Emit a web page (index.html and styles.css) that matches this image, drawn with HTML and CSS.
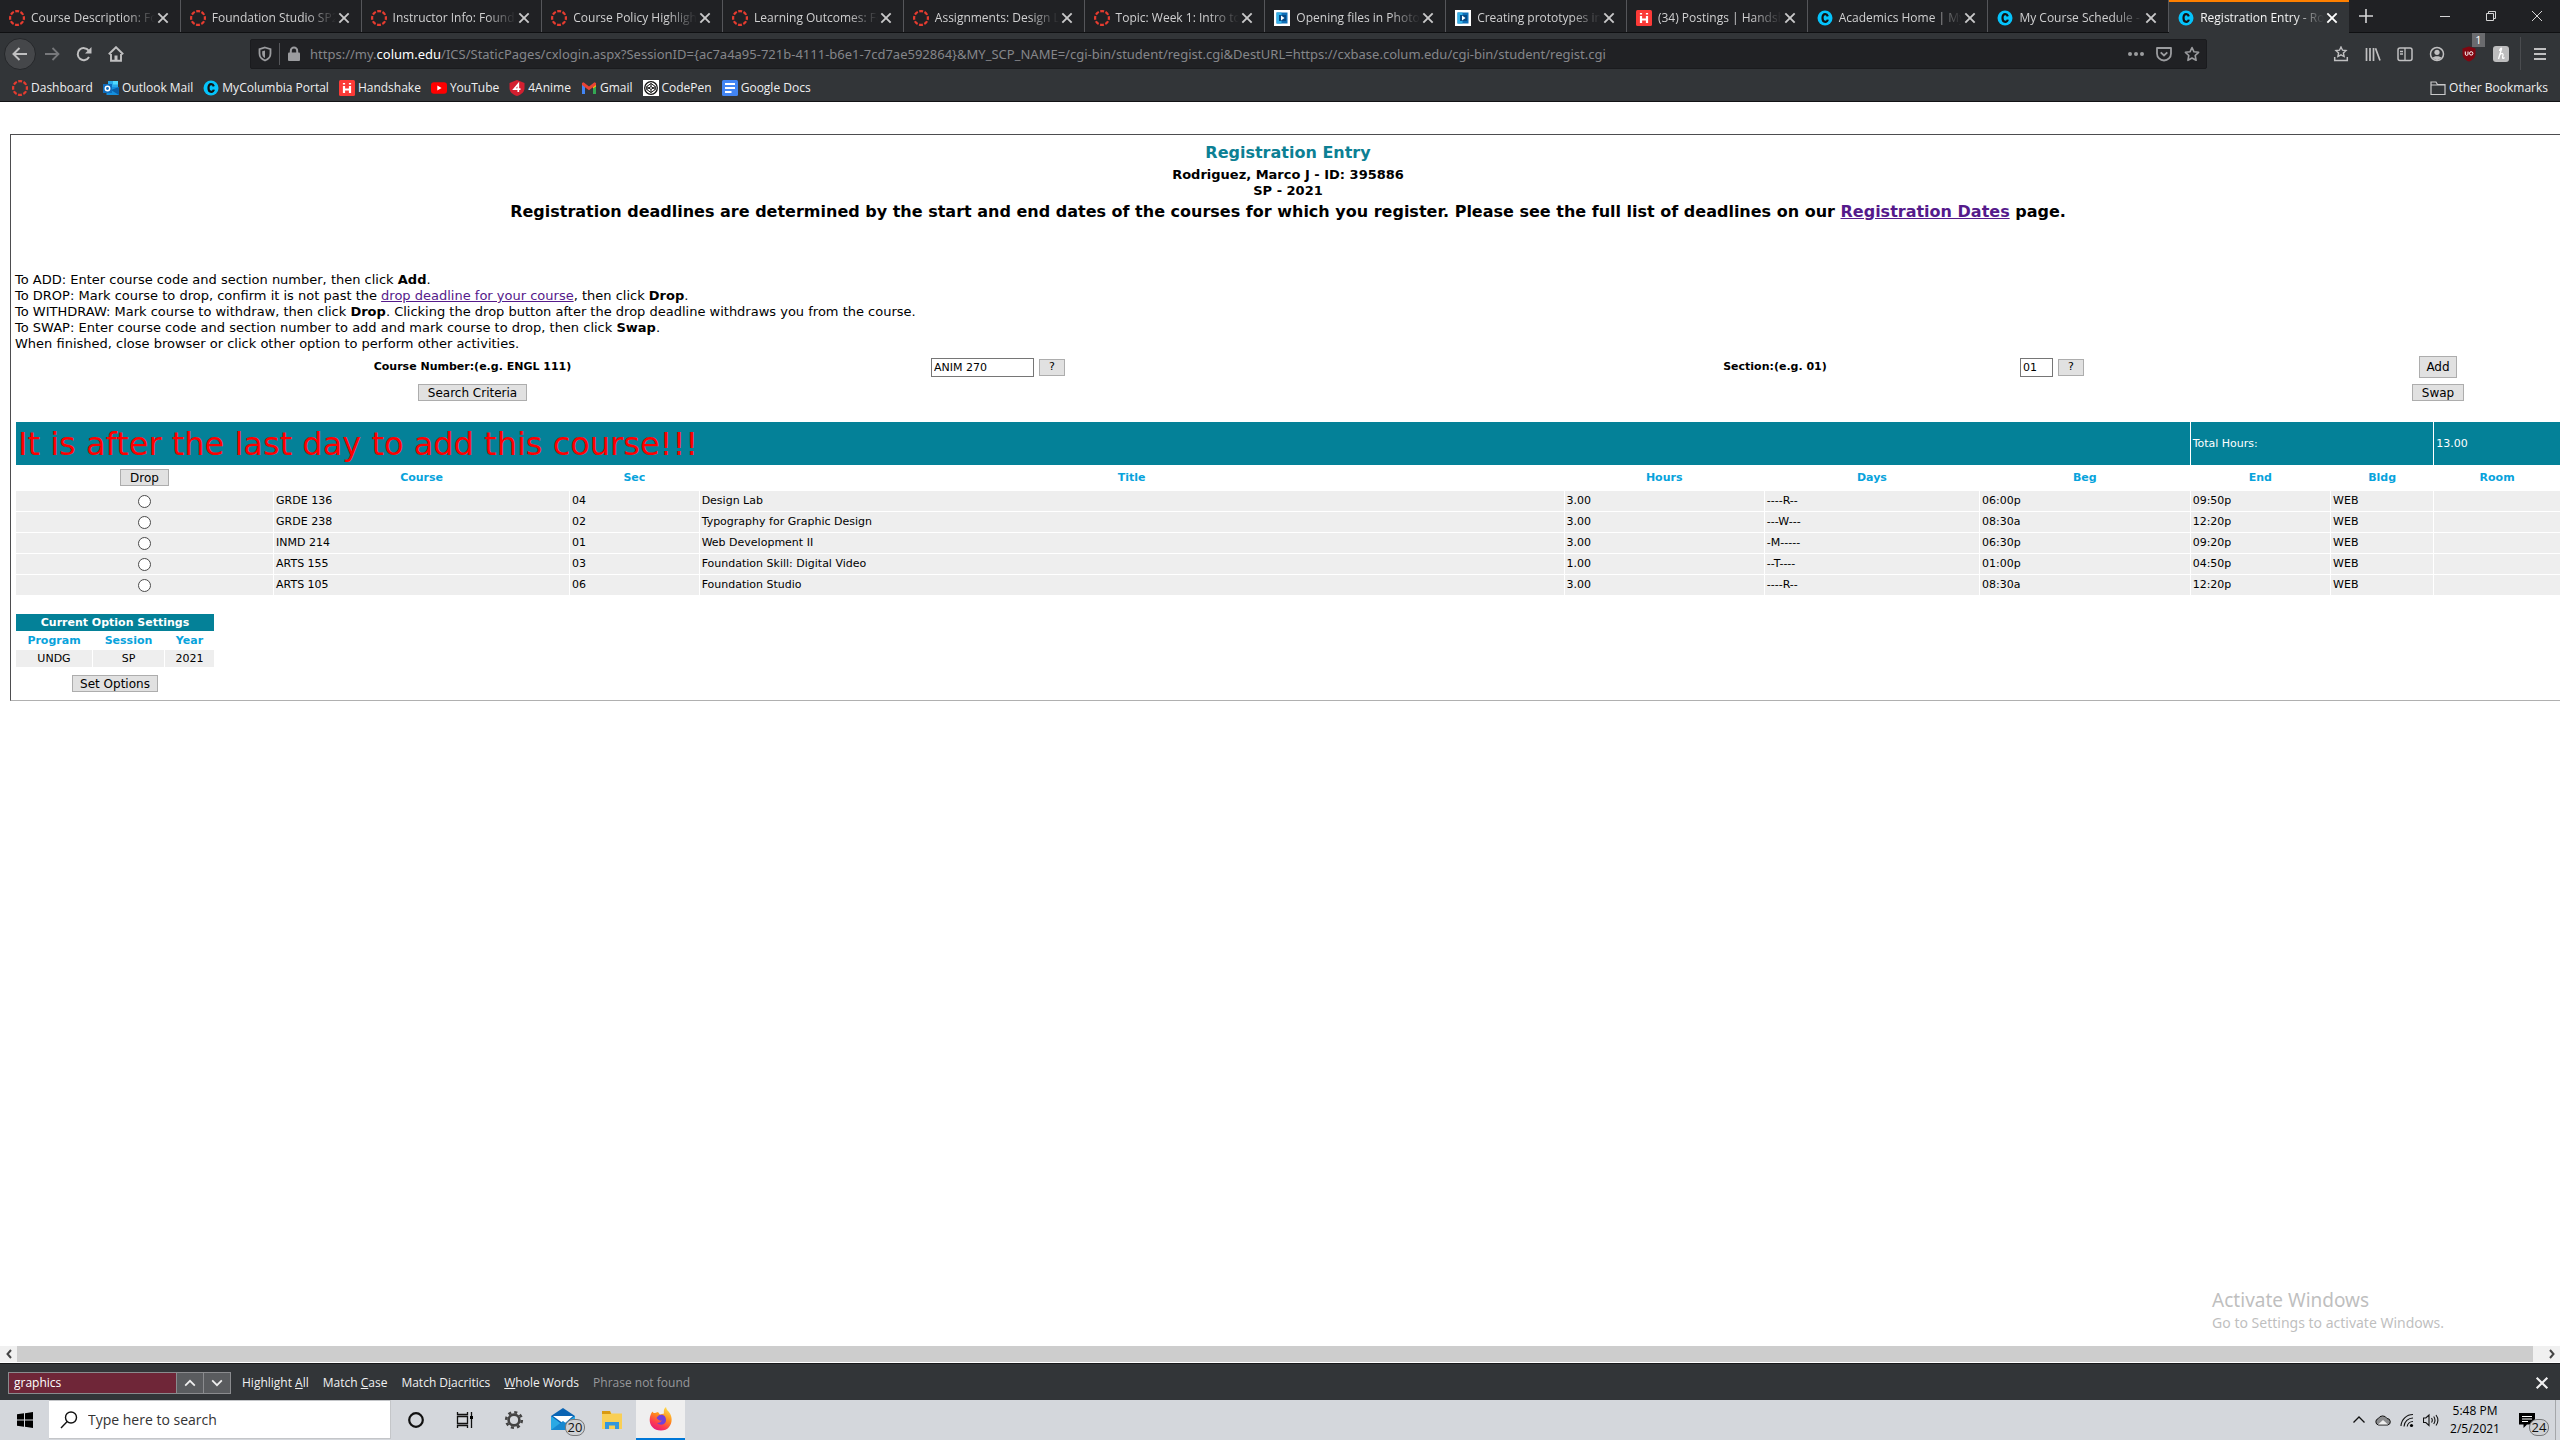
FILE: index.html
```
<!DOCTYPE html>
<html lang="en">
<head>
<meta charset="utf-8">
<title>Registration Entry</title>
<link rel="stylesheet" href="styles.css">
</head>
<body>
<svg class="defs" aria-hidden="true">
  <symbol id="canvas" viewBox="0 0 16 16"><circle cx="8" cy="8" r="6.900" fill="none" stroke="#e63c30" stroke-width="2.200" stroke-dasharray="3.900 1.520" stroke-dashoffset="2"/></symbol>
  <symbol id="lesson" viewBox="0 0 16 16"><path fill="#fff" d="M0 0h16v16H0z"/><path fill="#0f6fb8" d="M2.500 2.500h11v11h-11z"/><path fill="#33b1e8" d="M2.500 2.500h5v11h-5z"/><path fill="#064a86" d="M5 5h7v6H5z"/><path fill="#fff" d="M7 5.500v5L10.500 8z"/></symbol>
  <symbol id="handshake" viewBox="0 0 16 16"><rect width="16" height="16" rx="1.500" fill="#fb3a37"/><path d="M5 6v7M11 6v7M5 9.500h6M5 3v1.600M11 3v1.600" stroke="#fff" stroke-width="2.200"/></symbol>
  <symbol id="columbia" viewBox="0 0 16 16"><circle cx="8" cy="8" r="7.500" fill="#05c3fb"/><path d="M10.800 6.300C10.300 4.800 9.400 4.200 8.200 4.200 6.400 4.200 5.500 5.500 5.500 8s.9 3.800 2.700 3.800c1.300 0 2.300-.7 2.600-2.200" fill="none" stroke="#111" stroke-width="2.200"/></symbol>
  <symbol id="x" viewBox="0 0 12 12"><path d="M2 2l8 8M10 2l-8 8" fill="none" stroke="currentColor" stroke-width="1.600"/></symbol>
  <symbol id="star" viewBox="0 0 16 16"><path d="M8 1.500l2 4.300 4.600.5-3.400 3.200.9 4.800L8 12l-4.100 2.300.9-4.800L1.400 6.300 6 5.800z" fill="none" stroke="currentColor" stroke-width="1.600" stroke-linejoin="round"/></symbol>
</svg>

<nav class="tabs" aria-label="Tabs">
  <div class="tab"><svg class="ico"><use href="#canvas"/></svg><span class="tab-title">Course Description: Fo</span><button class="close" aria-label="Close tab"><svg><use href="#x"/></svg></button></div>
  <div class="tab"><svg class="ico"><use href="#canvas"/></svg><span class="tab-title">Foundation Studio SP2</span><button class="close" aria-label="Close tab"><svg><use href="#x"/></svg></button></div>
  <div class="tab"><svg class="ico"><use href="#canvas"/></svg><span class="tab-title">Instructor Info: Founda</span><button class="close" aria-label="Close tab"><svg><use href="#x"/></svg></button></div>
  <div class="tab"><svg class="ico"><use href="#canvas"/></svg><span class="tab-title">Course Policy Highligh</span><button class="close" aria-label="Close tab"><svg><use href="#x"/></svg></button></div>
  <div class="tab"><svg class="ico"><use href="#canvas"/></svg><span class="tab-title">Learning Outcomes: Fo</span><button class="close" aria-label="Close tab"><svg><use href="#x"/></svg></button></div>
  <div class="tab"><svg class="ico"><use href="#canvas"/></svg><span class="tab-title">Assignments: Design L</span><button class="close" aria-label="Close tab"><svg><use href="#x"/></svg></button></div>
  <div class="tab"><svg class="ico"><use href="#canvas"/></svg><span class="tab-title">Topic: Week 1: Intro to</span><button class="close" aria-label="Close tab"><svg><use href="#x"/></svg></button></div>
  <div class="tab"><svg class="ico"><use href="#lesson"/></svg><span class="tab-title">Opening files in Photos</span><button class="close" aria-label="Close tab"><svg><use href="#x"/></svg></button></div>
  <div class="tab"><svg class="ico"><use href="#lesson"/></svg><span class="tab-title">Creating prototypes in</span><button class="close" aria-label="Close tab"><svg><use href="#x"/></svg></button></div>
  <div class="tab"><svg class="ico"><use href="#handshake"/></svg><span class="tab-title">(34) Postings | Handsh</span><button class="close" aria-label="Close tab"><svg><use href="#x"/></svg></button></div>
  <div class="tab"><svg class="ico"><use href="#columbia"/></svg><span class="tab-title">Academics Home | My</span><button class="close" aria-label="Close tab"><svg><use href="#x"/></svg></button></div>
  <div class="tab"><svg class="ico"><use href="#columbia"/></svg><span class="tab-title">My Course Schedule - S</span><button class="close" aria-label="Close tab"><svg><use href="#x"/></svg></button></div>
  <div class="tab active"><svg class="ico"><use href="#columbia"/></svg><span class="tab-title">Registration Entry - Ro</span><button class="close" aria-label="Close tab"><svg><use href="#x"/></svg></button></div>
  <div class="window-controls">
    <button aria-label="New tab"><svg viewBox="0 0 16 16"><path d="M8 1v14M1 8h14" stroke="#d5d5d6" stroke-width="1.600"/></svg></button>
    <span class="drag"></span>
    <button aria-label="Minimize"><svg viewBox="0 0 16 16"><path d="M3 8.500h10" stroke="#d5d5d6"/></svg></button>
    <button aria-label="Restore"><svg viewBox="0 0 16 16"><path d="M3.500 5.500h7v7h-7zM5.500 5V3.500h7v7H11" fill="none" stroke="#d5d5d6"/></svg></button>
    <button aria-label="Close window"><svg viewBox="0 0 16 16"><path d="M3 3l10 10M13 3L3 13" stroke="#d5d5d6"/></svg></button>
  </div>
</nav>

<div class="toolbar">
  <div class="nav-buttons">
    <button class="back" aria-label="Back"><svg viewBox="0 0 16 16"><path d="M15 8H2M7.500 2L1.500 8l6 6" fill="none" stroke="currentColor" stroke-width="2"/></svg></button>
    <button class="forward" aria-label="Forward"><svg viewBox="0 0 16 16"><path d="M1 8h13M8.500 2l6 6-6 6" fill="none" stroke="currentColor" stroke-width="1.800"/></svg></button>
    <button aria-label="Reload"><svg viewBox="0 0 16 16"><path d="M13 11a6 6 0 1 1-.4-6.400" fill="none" stroke="currentColor" stroke-width="2"/><path d="M15.500 1v6.500H9z" fill="currentColor"/></svg></button>
    <button aria-label="Home"><svg viewBox="0 0 16 16"><path d="M.8 8.300L8 1.200l7.200 7.100M3 8v6.800h10V8" fill="none" stroke="currentColor" stroke-width="1.900"/><path d="M6.500 15V9.500h3V15" fill="currentColor"/></svg></button>
  </div>
  <div class="url">
    <svg class="u16" viewBox="0 0 16 16"><path d="M8 1.500l5.500 1.600v4.400c0 3.500-2 5.700-5.500 7-3.500-1.300-5.500-3.500-5.500-7V3.100z" fill="none" stroke="currentColor" stroke-width="1.800"/><path d="M8 4.500v7.500C6 11 5.200 9.500 5.200 7.500V5.300z" fill="currentColor"/></svg>
    <i class="u-sep"></i>
    <svg class="u16" viewBox="0 0 16 16"><rect x="2" y="6.500" width="12" height="8.500" rx="1" fill="currentColor"/><path d="M4.800 7V4.800a3.200 3.200 0 0 1 6.400 0V7" fill="none" stroke="currentColor" stroke-width="2"/></svg>
    <span class="address">https://my.<b>colum.edu</b>/ICS/StaticPages/cxlogin.aspx?SessionID={ac7a4a95-721b-4111-b6e1-7cd7ae592864}&amp;MY_SCP_NAME=/cgi-bin/student/regist.cgi&amp;DestURL=https://cxbase.colum.edu/cgi-bin/student/regist.cgi</span>
    <div class="page-actions">
      <button aria-label="Page actions"><svg viewBox="0 0 16 16"><circle cx="2" cy="8" r="2" fill="currentColor"/><circle cx="8" cy="8" r="2" fill="currentColor"/><circle cx="14" cy="8" r="2" fill="currentColor"/></svg></button>
      <button aria-label="Save to Pocket"><svg viewBox="0 0 16 16"><path d="M1 2h14v5.500a7 7 0 0 1-14 0z" fill="none" stroke="currentColor" stroke-width="1.800" stroke-linejoin="round"/><path d="M4.700 6.300L8 9.500l3.300-3.200" fill="none" stroke="currentColor" stroke-width="1.800"/></svg></button>
      <button aria-label="Bookmark"><svg><use href="#star"/></svg></button>
    </div>
  </div>
  <div class="ext">
    <button aria-label="Bookmarks menu"><svg viewBox="0 0 16 16"><path d="M8 1l1.500 3.200 3.500.4-2.600 2.400.7 3.500L8 8.800l-3.100 1.700.7-3.500L3 4.600l3.500-.4z" fill="none" stroke="currentColor" stroke-width="1.400"/><path d="M1.700 11v3.500h12.600V11" fill="none" stroke="currentColor" stroke-width="1.500"/></svg></button>
    <button aria-label="Library"><svg viewBox="0 0 16 16"><path d="M1.500 2v13M5 2v13M8.500 2v13M10.500 2.300L15 14.500" fill="none" stroke="currentColor" stroke-width="1.700"/></svg></button>
    <button aria-label="Sidebars"><svg viewBox="0 0 16 16"><rect x="1" y="2" width="14" height="12.500" rx="2" fill="none" stroke="currentColor" stroke-width="1.500"/><path d="M8 2v12M3 5.500h3M3 8h3" stroke="currentColor" stroke-width="1.300"/></svg></button>
    <button aria-label="Account"><svg viewBox="0 0 16 16"><circle cx="8" cy="8" r="6.500" fill="none" stroke="currentColor" stroke-width="1.500"/><circle cx="8" cy="6.300" r="2.600" fill="currentColor"/><path d="M3.500 12c1-2.500 8-2.500 9 0L8 14.300z" fill="currentColor"/></svg></button>
    <button class="ublock" aria-label="uBlock Origin, 1 blocked"><svg viewBox="0 0 16 16"><path d="M8 .5l6.500 2v5c0 4-2.500 6.500-6.500 8-4-1.500-6.500-4-6.500-8v-5z" fill="#800610"/><path d="M4.300 5.500v2.700c0 1.600 2.700 1.600 2.700 0V5.500" fill="none" stroke="#fff"/><circle cx="10.200" cy="7.400" r="1.700" fill="none" stroke="#fff"/></svg><span class="count">1</span></button>
    <button aria-label="Honey"><svg viewBox="0 0 16 16"><rect width="16" height="16" rx="3" fill="#bdbdbe"/><path d="M5.500 13L8.500 3c.5-1.500-1.500-1-2 2M6.700 9c3-3 4-1 3 1.500-.6 2 .5 2.500 1.800 1" fill="none" stroke="#fff" stroke-width="1.300"/></svg></button>
    <i class="ext-sep"></i>
    <button aria-label="Menu"><svg viewBox="0 0 16 16"><path d="M2 3h12M2 8h12M2 13h12" stroke="currentColor" stroke-width="1.800"/></svg></button>
  </div>
</div>

<nav class="bookmarks" aria-label="Bookmarks">
  <a href="#"><svg class="ico"><use href="#canvas"/></svg>Dashboard</a>
  <a href="#"><svg class="ico" viewBox="0 0 16 16"><path fill="#28a8ea" d="M5 1h10v7H5z"/><path fill="#50d9ff" d="M10 1h5v3.500h-5z"/><path fill="#1490df" d="M3.500 7H16v8H3.500z"/><path fill="#0a5ea8" d="M16 7v8L8 10z"/><path fill="#0f6cbd" d="M0 4h9v9H0z"/><circle cx="4.500" cy="8.500" r="2.200" fill="none" stroke="#fff" stroke-width="1.500"/></svg>Outlook Mail</a>
  <a href="#"><svg class="ico"><use href="#columbia"/></svg>MyColumbia Portal</a>
  <a href="#"><svg class="ico"><use href="#handshake"/></svg>Handshake</a>
  <a href="#"><svg class="ico" viewBox="0 0 16 16"><rect y="2.300" width="16" height="11.400" rx="3" fill="#f00"/><path d="M6.300 5.500v5l4.300-2.500z" fill="#fff"/></svg>YouTube</a>
  <a href="#"><svg class="ico" viewBox="0 0 16 16"><path d="M8 0l7.500 3v5c0 4-3 6.500-7.500 8C3.500 14.500.5 12 .5 8V3z" fill="#d32030"/><path d="M9.300 12V4L5 9.200h6.500" fill="none" stroke="#fff" stroke-width="1.700"/></svg>4Anime</a>
  <a href="#"><svg class="ico" viewBox="0 0 16 16"><path d="M1 3.500h3V14H1z" fill="#4285f4"/><path d="M12 3.500h3V14h-3z" fill="#34a853"/><path d="M12 5l3-2v3.500l-3 2z" fill="#fbbc04"/><path d="M1 3l1.500-.8L8 6.500l5.500-4.300L15 3v2L8 10.300 1 5z" fill="#ea4335"/></svg>Gmail</a>
  <a href="#"><svg class="ico" viewBox="0 0 16 16"><path fill="#fff" d="M0 0h16v16H0z"/><circle cx="8" cy="8" r="6.300" fill="none" stroke="#111" stroke-width="1.300"/><path d="M8 3.500l4.300 3v3l-4.300 3-4.300-3v-3zM3.700 6.500L8 9.500l4.300-3M3.700 9.500L8 6.500l4.300 3M8 3.500v3M8 9.500v3" fill="none" stroke="#111"/></svg>CodePen</a>
  <a href="#"><svg class="ico" viewBox="0 0 16 16"><rect width="16" height="16" rx="1.500" fill="#4285f4"/><path d="M3 4h10M3 8h10M3 12h6.500" stroke="#fff" stroke-width="2"/></svg>Google Docs</a>
  <a class="other" href="#"><svg class="ico" viewBox="0 0 16 16"><path d="M1 14.500V2h5l1.500 2.500H15v10zM1 5h14" fill="none" stroke="#c9c9ca" stroke-width="1.200"/></svg>Other Bookmarks</a>
</nav>

<main class="page">
  <section class="frame">
    <header class="head">
      <h1>Registration Entry</h1>
      <p class="who">Rodriguez, Marco J - ID: 395886<br>SP - 2021</p>
      <p class="deadline">Registration deadlines are determined by the start and end dates of the courses for which you register. Please see the full list of deadlines on our <a href="#">Registration Dates</a> page.</p>
    </header>
    <p class="help">To ADD: Enter course code and section number, then click <b>Add</b>.<br>
      To DROP: Mark course to drop, confirm it is not past the <a href="#">drop deadline for your course</a>, then click <b>Drop</b>.<br>
      To WITHDRAW: Mark course to withdraw, then click <b>Drop</b>. Clicking the drop button after the drop deadline withdraws you from the course.<br>
      To SWAP: Enter course code and section number to add and mark course to drop, then click <b>Swap</b>.<br>
      When finished, close browser or click other option to perform other activities.</p>
    <form class="entry">
      <label for="course">Course Number:(e.g. ENGL 111)</label>
      <div class="field"><input class="course-input" id="course" value="ANIM 270"><button type="button" class="btn q">?</button></div>
      <label for="section">Section:(e.g. 01)</label>
      <div class="field"><input class="section-input" id="section" value="01"><button type="button" class="btn q">?</button></div>
      <button type="button" class="btn add">Add</button>
      <button type="button" class="btn">Search Criteria</button>
      <button type="button" class="btn swap">Swap</button>
    </form>
    <table class="courses">
      <colgroup><col class="c1"><col class="c2"><col class="c3"><col class="c4"><col class="c5"><col class="c6"><col class="c7"><col class="c8"><col class="c9"><col class="c10"></colgroup>
      <thead>
        <tr class="banner"><td class="alert" colspan="7">It is after the last day to add this course!!!</td><td colspan="2">Total Hours:</td><td>13.00</td></tr>
        <tr><th><button type="button" class="btn">Drop</button></th><th>Course</th><th>Sec</th><th>Title</th><th>Hours</th><th>Days</th><th>Beg</th><th>End</th><th>Bldg</th><th>Room</th></tr>
      </thead>
      <tbody>
        <tr><td><input type="radio" name="drop" aria-label="Drop GRDE 136"></td><td>GRDE 136</td><td>04</td><td>Design Lab</td><td>3.00</td><td>----R--</td><td>06:00p</td><td>09:50p</td><td>WEB</td><td></td></tr>
        <tr><td><input type="radio" name="drop" aria-label="Drop GRDE 238"></td><td>GRDE 238</td><td>02</td><td>Typography for Graphic Design</td><td>3.00</td><td>---W---</td><td>08:30a</td><td>12:20p</td><td>WEB</td><td></td></tr>
        <tr><td><input type="radio" name="drop" aria-label="Drop INMD 214"></td><td>INMD 214</td><td>01</td><td>Web Development II</td><td>3.00</td><td>-M-----</td><td>06:30p</td><td>09:20p</td><td>WEB</td><td></td></tr>
        <tr><td><input type="radio" name="drop" aria-label="Drop ARTS 155"></td><td>ARTS 155</td><td>03</td><td>Foundation Skill: Digital Video</td><td>1.00</td><td>--T----</td><td>01:00p</td><td>04:50p</td><td>WEB</td><td></td></tr>
        <tr><td><input type="radio" name="drop" aria-label="Drop ARTS 105"></td><td>ARTS 105</td><td>06</td><td>Foundation Studio</td><td>3.00</td><td>----R--</td><td>08:30a</td><td>12:20p</td><td>WEB</td><td></td></tr>
      </tbody>
    </table>
    <div class="options">
      <table class="settings">
        <colgroup><col class="s1"><col class="s2"><col></colgroup>
        <thead>
          <tr><th class="settings-title" colspan="3">Current Option Settings</th></tr>
          <tr><th>Program</th><th>Session</th><th>Year</th></tr>
        </thead>
        <tbody><tr><td>UNDG</td><td>SP</td><td>2021</td></tr></tbody>
      </table>
      <button type="button" class="btn">Set Options</button>
    </div>
  </section>
  <aside class="watermark"><p class="wm-title">Activate Windows</p><p>Go to Settings to activate Windows.</p></aside>
</main>

<div class="hscroll">
  <button aria-label="Scroll left"><svg viewBox="0 0 16 16"><path d="M10 4L6.500 8l3.500 4" fill="none" stroke="#444" stroke-width="2"/></svg></button>
  <span class="thumb"></span>
  <button aria-label="Scroll right"><svg viewBox="0 0 16 16"><path d="M6 4l3.500 4L6 12" fill="none" stroke="#444" stroke-width="2"/></svg></button>
</div>

<div class="findbar">
  <div class="find-group"><input class="find-input" aria-label="Find in page" value="graphics"><button aria-label="Previous"><svg viewBox="0 0 16 16"><path d="M2.500 11L8 5.500l5.500 5.500" fill="none" stroke="#eee" stroke-width="2"/></svg></button><button aria-label="Next"><svg viewBox="0 0 16 16"><path d="M2.500 5L8 10.500 13.500 5" fill="none" stroke="#eee" stroke-width="2"/></svg></button></div>
  <button class="opt">Highlight <u>A</u>ll</button>
  <button class="opt">Match <u>C</u>ase</button>
  <button class="opt">Match D<u>i</u>acritics</button>
  <button class="opt"><u>W</u>hole Words</button>
  <span class="status">Phrase not found</span>
  <button class="find-close" aria-label="Close find bar"><svg><use href="#x"/></svg></button>
</div>

<footer class="taskbar">
  <button class="start" aria-label="Start"><svg viewBox="0 0 16 16"><path d="M0 2.300L7 1.300V7.500H0zM8 1.200L16 0v7.500H8zM0 8.500h7v6.200L0 13.700zM8 8.500h8V16l-8-1.200z"/></svg></button>
  <label class="search"><svg viewBox="0 0 20 20"><circle cx="12" cy="7.500" r="5.500" fill="none" stroke="#111" stroke-width="1.400"/><path d="M8.200 11.500L2 18" stroke="#111" stroke-width="1.400"/></svg><input placeholder="Type here to search"></label>
  <div class="apps">
    <button aria-label="Cortana"><svg viewBox="0 0 24 24"><circle cx="12" cy="12" r="6.800" fill="none" stroke="#111" stroke-width="2.200"/></svg></button>
    <button aria-label="Task View"><svg viewBox="0 0 24 24"><path d="M4.500 8.500h10v7h-10zM4.500 4v2.500h10V4M4.500 20v-2.500h10V20M18.500 4v16" fill="none" stroke="#111" stroke-width="1.300"/><path d="M17 8h3v3h-3z"/></svg></button>
    <button aria-label="Settings"><svg viewBox="0 0 24 24"><circle cx="12" cy="12" r="7.800" fill="none" stroke="#444" stroke-width="2.600" stroke-dasharray="3.060 3.066"/><circle cx="12" cy="12" r="5.400" fill="none" stroke="#444" stroke-width="2.600"/></svg></button>
    <button class="mail" aria-label="Mail, 20 unread"><svg viewBox="0 0 24 24"><path d="M0 8L12 0l12 8v13H0z" fill="#0a64b4"/><path d="M2 8h20l-9 8z" fill="#fff"/><path d="M0 8l12 9 12-9v14H0z" fill="#29a9e4"/><path d="M0 22L12 13l12 9z" fill="#1688d0"/></svg><span class="badge">20</span></button>
    <button aria-label="File Explorer"><svg viewBox="0 0 24 24"><path d="M2 3h8l1.500 2.500H22V21H2z" fill="#f9cf55"/><path d="M2 3h8l1 3H2z" fill="#d99a12"/><path d="M5 21v-7h14v7h-4v-3.500H9V21z" fill="#3497dd"/></svg></button>
    <button class="firefox" aria-label="Firefox"><svg viewBox="0 0 24 24"><defs><linearGradient id="ff" x1=".8" y1="0" x2=".3" y2="1"><stop offset="0" stop-color="#ffe14a"/><stop offset=".45" stop-color="#ff8a1c"/><stop offset=".75" stop-color="#ff3b50"/><stop offset="1" stop-color="#e21b7c"/></linearGradient></defs><path d="M3.500 4.500c.5 1.300 1.300 1.700 2.500 1.600L9 5l2 2.500 4-1C14.500 4 15 1.500 17 0c.3 3 2.500 4 4 6.500 4 7 .5 17-9 17C4.500 23.500.5 18 .7 12.500.8 9 2 6.500 3.500 4.500z" fill="url(#ff)"/><path d="M9 9c3-2.500 8-1 8 4s-6 6-9 3c3 0 4-1.500 5-2.500-2 .5-4-.5-5.500-2.500z" fill="#7340d8"/></svg></button>
  </div>
  <div class="tray">
    <svg viewBox="0 0 16 16"><path d="M2.500 10.500L8 5l5.500 5.500" fill="none" stroke="#111" stroke-width="1.300"/></svg>
    <svg viewBox="0 0 16 16"><path d="M3.500 13a3.300 3.300 0 0 1-.3-6.400A5 5 0 0 1 12 6.500a3.300 3.300 0 0 1 .8 6.500z" fill="#8a8b8d" stroke="#111"/><path d="M3 12.500L8 8l5 4.500z" fill="#eee"/></svg>
    <svg viewBox="0 0 16 16"><path d="M2 14A12 12 0 0 1 14 2.500M5 14.500a9 9 0 0 1 9-8.500M8.200 14.500A5.800 5.800 0 0 1 14 9.500" fill="none" stroke="#111" stroke-width="1.100"/><circle cx="12.500" cy="13.500" r="1.600"/></svg>
    <svg viewBox="0 0 16 16"><path d="M.5 6h2.300L6 3v10.500L2.800 10.500H.5zM8.500 6q1.600 2.300 0 4.500M10.700 4.500q2.600 3.700 0 7.500M13 3q3.800 5.200 0 10.500" fill="none" stroke="#111" stroke-width="1.100"/></svg>
    <p class="clock">5:48 PM<br>2/5/2021</p>
    <button class="notes" aria-label="24 notifications"><svg viewBox="0 0 16 16"><path d="M0 1h16v11.500H8L4.500 16v-3.500H0z"/><path d="M3 4.500h10M3 7h10M3 9.500h6" stroke="#fff"/></svg><span class="badge">24</span></button>
  </div>
</footer>
</body>
</html>
```
FILE: styles.css
```
* { box-sizing: border-box; }
html, body { height: 100%; }
body {
  margin: 0;
  display: flex;
  flex-direction: column;
  overflow: hidden;
  background: #fff;
  color: #000;
  font: 12px/16px "Open Sans", "Noto Sans", sans-serif;
}
h1, p { margin: 0; }
button { font: inherit; color: inherit; padding: 0; border: 0; background: none; display: flex; align-items: center; justify-content: center; }
svg { display: block; flex: none; width: 16px; height: 16px; }
.defs { position: absolute; width: 0; height: 0; }

/* Tab strip */
.tabs { flex: none; display: flex; height: 33px; background: #202124; color: #d0d0d1; border-bottom: 1px solid #0f1012; }
.tab { flex: 1 1 0; min-width: 0; display: flex; align-items: center; padding: 3px 9px 0 9px; border-right: 1px solid #55565a; }
.tab-title { flex: 1; min-width: 0; padding-left: 6px; white-space: nowrap; mask-image: linear-gradient(to right, #000 calc(100% - 30px), transparent); }
.close { width: 16px; height: 16px; color: #c8c8c9; }
.close svg { width: 14px; height: 14px; }
.tab.active { background: #323538; color: #f5f5f5; box-shadow: inset 0 2px #ff8000; border-right: 0; margin-bottom: -1px; padding-bottom: 1px; }
.active .close { color: #fff; }
.window-controls { flex: none; width: 211px; display: flex; padding-left: 9px; }
.window-controls button { width: 46px; }
.window-controls button:first-child { width: 16px; }
.drag { flex: 1; }

/* Navigation toolbar */
.toolbar { flex: none; display: flex; align-items: center; height: 41px; padding: 0 12px 0 4px; background: #323538; color: #c0c0c1; }
.nav-buttons { display: flex; width: 246px; }
.nav-buttons button { width: 32px; height: 32px; }
.nav-buttons .back { border: 1px solid #25272a; border-radius: 50%; background: #45474a; }
.forward { color: #77787b; }
.url { flex: 1; display: flex; align-items: center; height: 30px; padding: 0 6px; background: #202124; border: 1px solid #1a1b1e; border-radius: 2px; color: #9b9c9f; }
.u-sep { width: 1px; height: 22px; margin: 0 6px; background: #55565a; }
.address { flex: 1; margin-left: 8px; overflow: hidden; white-space: nowrap; font: 13px/20px "Noto Sans", sans-serif; color: #85868a; }
.address b { font-weight: 400; color: #fff; }
.page-actions { display: flex; gap: 12px; }
.ext { display: flex; align-items: center; gap: 16px; margin-left: 126px; }
.ext-sep { width: 1px; height: 33px; margin: 0 -5px; background: #4a4c4f; }
.ublock { position: relative; }
.count { position: absolute; left: 11px; top: -13px; width: 13px; height: 14px; background: #6a6b6e; color: #fff; font-size: 11px; line-height: 14px; }

/* Bookmarks bar */
.bookmarks { flex: none; display: flex; align-items: center; gap: 10px; height: 28px; padding: 0 12px; background: #323538; border-bottom: 1px solid #111214; }
.bookmarks a { display: flex; align-items: center; gap: 3px; color: #f0f0f1; text-decoration: none; }
.bookmarks .other { margin-left: auto; }

/* Registration page */
.page { flex: 1; min-height: 0; position: relative; overflow: hidden; font: 11px/16px "DejaVu Sans", sans-serif; }
.page a { color: #551a8b; }
.frame { margin: 32px -6px 0 10px; padding: 8px 4px; border: 1px solid #4d4d4f; border-bottom-color: #b0b0b0; }
.head { text-align: center; font-weight: 700; }
h1 { font-size: 16px; line-height: 20px; color: #0c8094; }
.who { font-size: 13px; padding: 4px 0 3px; }
.deadline { font-size: 16px; line-height: 20px; }
.help { margin-top: 50px; font-size: 13px; }
.btn { display: inline-flex; height: 17px; padding: 0 9px; border: 1px solid #adadad; background: #e1e1e1; font-size: 12px; font-weight: 400; line-height: 14px; }
.btn.q { font-size: 11px; }
.entry { display: grid; grid-template-columns: 915fr 601fr 488fr 296fr 246fr; grid-template-rows: 24px 17px; row-gap: 5px; align-items: center; justify-items: center; margin-top: 3px; font-weight: 700; }
.field { justify-self: start; display: flex; align-items: center; gap: 5px; padding-left: 1px; }
.field input { height: 19px; padding: 0 2px; border: 1px solid #767676; font: 11px/16px "DejaVu Sans", sans-serif; }
.course-input { width: 103px; }
.section-input { width: 33px; }
.btn.add { height: 22px; padding: 0 6px; }
.swap { grid-column: 5; }

.courses { width: 100%; margin-top: 20px; table-layout: fixed; border-spacing: 1px; }
.courses td { height: 20px; padding: 0 2px; background: #eee; }
.courses th { height: 24px; padding: 0; color: #08a3dc; }
.courses th .btn { color: #000; }
.courses td:first-child:not(.alert) { text-align: center; }
.courses .banner td { height: 43px; background: #048198; color: #fff; }
.courses .banner .alert { color: #f00; font-size: 32px; line-height: 40px; }
input[type="radio"] { appearance: none; display: block; width: 13px; height: 13px; margin: 1px auto 0; border: 1px solid #4a4a4a; border-radius: 50%; background: #fff; }
.c1 { width: 10.14%; } .c2 { width: 11.64%; } .c3 { width: 5.07%; } .c4 { width: 34.08%; } .c5 { width: 7.86%; }
.c6 { width: 8.45%; } .c7 { width: 8.27%; } .c8 { width: 5.5%; } .c9 { width: 4.03%; }

.options { display: inline-flex; flex-direction: column; align-items: center; margin-top: 17px; vertical-align: top; }
.settings { width: 200px; table-layout: fixed; border-spacing: 1px; text-align: center; }
.s1 { width: 76px; }
.s2 { width: 71px; }
.settings th, .settings td { height: 17px; padding: 0; }
.settings th { color: #08a3dc; }
.settings td { background: #eee; }
.settings .settings-title { background: #048198; color: #fff; }
.options .btn { margin-top: 7px; padding: 0 7px; }

.watermark { position: absolute; right: 116px; bottom: 12px; color: #bfbfbf; font: 14px/22px "Noto Sans", sans-serif; }
.wm-title { font-size: 19px; line-height: 24px; }

/* Horizontal scroll bar */
.hscroll { flex: none; display: flex; height: 17px; background: #f0f0f0; border-bottom: 1px solid #fff; }
.hscroll button { width: 17px; }
.thumb { flex: 1; margin-right: 10px; background: #cdcdcd; }

/* Find bar */
.findbar { flex: none; display: flex; align-items: center; gap: 14px; height: 37px; padding: 1px 10px 0 8px; background: #323538; border-top: 1px solid #17181a; color: #f0f0f1; }
.find-group { display: flex; height: 22px; margin-right: -3px; border: 1px solid #8a8b8e; background: #5a5c5f; }
.find-input { width: 167px; padding: 0 5px; border: 0; background: #6f2638; color: #fff; font: inherit; }
.find-group button { width: 27px; border-left: 1px solid #8a8b8e; }
.find-group svg { width: 14px; height: 14px; }
.opt { display: block; }
.status { color: #97989b; }
.find-close { margin-left: auto; }

/* Task bar */
.taskbar { flex: none; display: flex; height: 40px; background: #d4d7dc; }
.start { width: 49px; }
.search { display: flex; align-items: center; gap: 8px; width: 342px; margin-bottom: 1px; padding-left: 10px; background: #fff; border: 1px solid #c4c6c9; border-left: 0; }
.search svg { width: 20px; height: 20px; }
.search input { flex: 1; border: 0; padding: 0 1px; font: 14px/20px "Open Sans", "Noto Sans", sans-serif; }
.search input::placeholder { color: #333; opacity: 1; }
.apps { display: flex; }
.apps button { width: 49px; position: relative; }
.apps svg { width: 24px; height: 24px; }
.apps .firefox { background: #efefef; border-bottom: 2px solid #0078d7; }
.badge { position: absolute; left: 55%; top: 47%; width: 20px; height: 17px; border: 1px solid #77787a; border-radius: 8px; background: #cfd1d4; color: #111; font-size: 13px; line-height: 15px; text-align: center; }
.tray { margin-left: auto; display: flex; align-items: center; gap: 8px; padding-right: 4px; }
.clock { width: 56px; line-height: 18px; text-align: center; }
.notes { position: relative; width: 53px; height: 40px; margin-left: -8px; padding-right: 4px; border-right: 1px solid #a5a7aa; }
.notes .badge { left: 50%; }
```
